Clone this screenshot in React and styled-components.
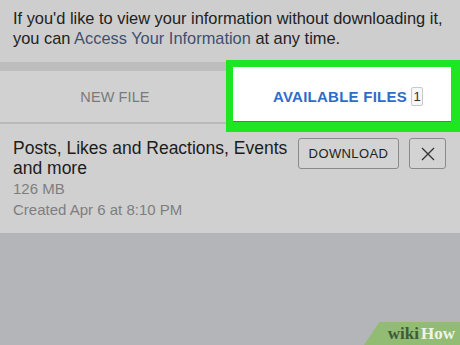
import React from "react";
import styled, { createGlobalStyle } from "styled-components";

const Global = createGlobalStyle`
  html, body { margin: 0; padding: 0; }
  body {
    background: #b4b5b8;
    font-family: "Liberation Sans", Arial, sans-serif;
    width: 460px;
    height: 345px;
    overflow: hidden;
  }
`;

const Page = styled.div`
  width: 460px;
  height: 345px;
  display: flex;
  flex-direction: column;
  position: relative;
  background: #b4b5b8;
`;

const Intro = styled.p`
  margin: 0;
  background: #cecece;
  padding: 8px 10px 4px 13px;
  height: 50px;
  font-size: 16.4px;
  line-height: 20px;
  color: #222;
`;

const Link = styled.span`
  color: #3f506f;
`;

const TabRow = styled.div`
  display: grid;
  grid-template-columns: 230px 1fr;
  height: 62px;
  position: relative;
`;

const Tab = styled.div`
  display: flex;
  align-items: center;
  justify-content: center;
  gap: 4px;
  font-size: ${(p) => (p.$active ? "15px" : "14.5px")};
  letter-spacing: ${(p) => (p.$active ? "0.25px" : "0.1px")};
  background: ${(p) => (p.$active ? "#ffffff" : "#d1d1d1")};
  color: ${(p) => (p.$active ? "#2f6cc9" : "#7a7a7a")};
  font-weight: ${(p) => (p.$active ? 700 : 400)};
  border-top: ${(p) => (p.$active ? "9px solid #ffffff" : "9px solid #bdbdbd")};
  border-bottom: ${(p) => (p.$active ? "3px solid #3a74cf" : "2px solid #b9b9b9")};
  box-sizing: border-box;
  padding-left: ${(p) => (p.$active ? "6px" : "0")};
`;

const Count = styled.span`
  display: inline-flex;
  align-items: center;
  justify-content: center;
  width: 10px;
  height: 17px;
  border: 1px solid #c9c9c9;
  border-radius: 2px;
  background: #f7f7f7;
  color: #333;
  font-weight: 400;
  font-size: 13px;
  letter-spacing: 0;
`;

const Highlight = styled.div`
  position: absolute;
  left: 226px;
  top: -2px;
  width: 234px;
  height: 72px;
  box-sizing: border-box;
  border-style: solid;
  border-color: #1fe622;
  border-width: 7px 9px 10px 7px;
  pointer-events: none;
`;

const FileRow = styled.div`
  background: #d0d0d0;
  display: flex;
  align-items: flex-start;
  padding: 14px 14px 12px 13px;
  height: 109px;
  box-sizing: border-box;
`;

const FileInfo = styled.div`
  flex: 1;
  display: flex;
  flex-direction: column;
`;

const Title = styled.div`
  font-size: 17.5px;
  line-height: 20px;
  color: #1c1c1c;
`;

const Meta = styled.div`
  font-size: 15px;
  line-height: 21px;
  color: #7e7e7e;
`;

const Actions = styled.div`
  display: flex;
  gap: 10px;
`;

const Button = styled.button`
  height: 31px;
  width: ${(p) => (p.$square ? "37px" : "101px")};
  border: 1px solid #8a8a8a;
  border-radius: 3px;
  background: #d3d3d3;
  color: #222;
  font-family: "Liberation Sans", Arial, sans-serif;
  font-size: 13px;
  letter-spacing: 0.4px;
  display: flex;
  align-items: center;
  justify-content: center;
  padding: 0;
`;

const Logo = styled.div`
  position: absolute;
  right: 0;
  bottom: 0;
  width: 96px;
  height: 23px;
  background: #92bb73;
  clip-path: polygon(16% 0, 100% 0, 100% 100%, 0 100%);
  display: flex;
  align-items: center;
  justify-content: flex-end;
  padding-right: 5px;
  padding-top: 1px;
  box-sizing: border-box;
  font-family: "Liberation Serif", "Times New Roman", serif;
  font-weight: 700;
  font-size: 17px;
`;

const Wiki = styled.span`
  color: #3f5a38;
`;
const How = styled.span`
  color: #eef3ea;
  margin-left: 2px;
`;

export default function App() {
  return (
    <>
      <Global />
      <Page>
        <Intro>
          If you'd like to view your information without downloading it, you can{" "}
          <Link>Access Your Information</Link> at any time.
        </Intro>
        <TabRow>
          <Tab>NEW FILE</Tab>
          <Tab $active>
            AVAILABLE FILES <Count>1</Count>
          </Tab>
          <Highlight />
        </TabRow>
        <FileRow>
          <FileInfo>
            <Title>Posts, Likes and Reactions, Events and more</Title>
            <Meta>126 MB</Meta>
            <Meta>Created Apr 6 at 8:10 PM</Meta>
          </FileInfo>
          <Actions>
            <Button>DOWNLOAD</Button>
            <Button $square aria-label="close">
              <svg width="16" height="16" viewBox="0 0 16 16">
                <path d="M2 2 L14 14 M14 2 L2 14" stroke="#333" strokeWidth="1.3" fill="none" />
              </svg>
            </Button>
          </Actions>
        </FileRow>
        <Logo>
          <Wiki>wiki</Wiki>
          <How>How</How>
        </Logo>
      </Page>
    </>
  );
}
